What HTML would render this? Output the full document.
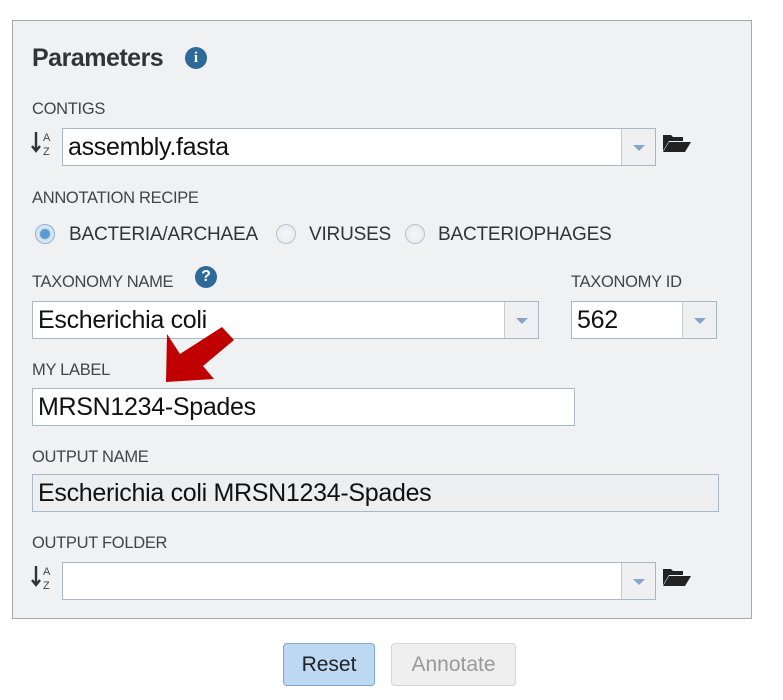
<!DOCTYPE html>
<html><head><style>
body{margin:0;width:783px;height:700px;background:#fff;font-family:"Liberation Sans",sans-serif;position:relative;overflow:hidden}
.a{position:absolute}
.panel{left:12px;top:20px;width:740px;height:599px;background:#f0f1f3;border:1px solid #a8a8a8;box-sizing:border-box}
.lbl{font-size:16.5px;color:#444;line-height:16px;letter-spacing:-0.3px}
.inp{background:#fff;border:1px solid #aab7c9;box-sizing:border-box;font-size:25px;color:#111;line-height:36px;padding-left:5px;letter-spacing:-0.3px;white-space:nowrap}
.dd{position:absolute;right:0;top:0;bottom:0;width:33px;background:#eef0f2;border-left:1px solid #c5ccd6}
.dd:after{content:"";position:absolute;left:11px;top:16px;border-left:6px solid transparent;border-right:6px solid transparent;border-top:6px solid #8aa4c6}
.rad{width:20px;height:20px;border-radius:50%;border:1px solid #b9c2cc;background:radial-gradient(circle,#f4f8fb 0,#e1e7ec 100%);box-sizing:border-box}
.rtxt{font-size:19px;color:#333;line-height:20px;letter-spacing:-0.2px}
</style></head><body>
<div class="a panel"></div>
<div class="a" style="left:32px;top:44px;font-size:25px;font-weight:bold;color:#333;letter-spacing:-0.5px">Parameters</div>
<div class="a" style="left:185px;top:47px;width:22px;height:22px;border-radius:50%;background:#2e6a99;color:#fff;font:bold 15px/22px 'Liberation Serif',serif;text-align:center">i</div>

<div class="a lbl" style="left:32px;top:101px">CONTIGS</div>
<svg class="a" style="left:31px;top:130px" width="24" height="26"><path d="M5 2v18M1 16l4 5 4-5" stroke="#333" stroke-width="2.4" fill="none"/><text x="12" y="11" font-size="11" font-family="Liberation Sans" fill="#444">A</text><text x="12" y="25" font-size="11" font-family="Liberation Sans" fill="#444">Z</text></svg>
<div class="a inp" style="left:62px;top:128px;width:594px;height:38px">assembly.fasta<div class="dd"></div></div>
<svg class="a" style="left:662px;top:132px" width="30" height="22"><path d="M1 3h8l2 2h10v4H7L1 19z" fill="#222"/><path d="M7 10h22l-6 10H1z" fill="#222"/></svg>

<div class="a lbl" style="left:32px;top:190px">ANNOTATION RECIPE</div>
<div class="a rad" style="left:35px;top:224px;background:radial-gradient(circle,#5b9bd0 0,#5b9bd0 35%,#cfe2f2 45%,#e8eef3 100%);border-color:#8fb1d1"></div>
<div class="a rtxt" style="left:69px;top:225px">BACTERIA/ARCHAEA</div>
<div class="a rad" style="left:276px;top:224px"></div>
<div class="a rtxt" style="left:309px;top:225px">VIRUSES</div>
<div class="a rad" style="left:405px;top:224px"></div>
<div class="a rtxt" style="left:438px;top:225px">BACTERIOPHAGES</div>

<div class="a lbl" style="left:32px;top:274px">TAXONOMY NAME</div>
<div class="a" style="left:195px;top:266px;width:22px;height:22px;border-radius:50%;background:#2e6a99;color:#fff;font:bold 16px/22px 'Liberation Sans',sans-serif;text-align:center">?</div>
<div class="a lbl" style="left:571px;top:274px">TAXONOMY ID</div>
<div class="a inp" style="left:32px;top:301px;width:507px;height:38px">Escherichia coli<div class="dd"></div></div>
<div class="a inp" style="left:571px;top:301px;width:146px;height:38px">562<div class="dd"></div></div>

<div class="a lbl" style="left:32px;top:362px">MY LABEL</div>
<div class="a inp" style="left:32px;top:388px;width:543px;height:38px">MRSN1234-Spades</div>

<div class="a lbl" style="left:32px;top:449px">OUTPUT NAME</div>
<div class="a inp" style="left:32px;top:474px;width:687px;height:38px;background:#eceef0">Escherichia coli MRSN1234-Spades</div>

<div class="a lbl" style="left:32px;top:535px">OUTPUT FOLDER</div>
<svg class="a" style="left:31px;top:564px" width="24" height="26"><path d="M5 2v18M1 16l4 5 4-5" stroke="#333" stroke-width="2.4" fill="none"/><text x="12" y="11" font-size="11" font-family="Liberation Sans" fill="#444">A</text><text x="12" y="25" font-size="11" font-family="Liberation Sans" fill="#444">Z</text></svg>
<div class="a inp" style="left:62px;top:562px;width:594px;height:38px"><div class="dd"></div></div>
<svg class="a" style="left:662px;top:566px" width="30" height="22"><path d="M1 3h8l2 2h10v4H7L1 19z" fill="#222"/><path d="M7 10h22l-6 10H1z" fill="#222"/></svg>

<svg class="a" style="left:150px;top:320px" width="90" height="70"><path d="M72 7L84 20 53 46 64 59 16 62 17 14 30 34z" fill="#c00000"/></svg>

<div class="a" style="left:283px;top:643px;width:92px;height:43px;box-sizing:border-box;border:1px solid #7ea6d0;border-radius:4px;background:#bcd8f3;font-size:21px;line-height:41px;text-align:center;color:#222">Reset</div>
<div class="a" style="left:391px;top:643px;width:125px;height:43px;box-sizing:border-box;border:1px solid #d6d6d6;border-radius:4px;background:#efefef;font-size:21px;line-height:41px;text-align:center;color:#999">Annotate</div>
</body></html>
